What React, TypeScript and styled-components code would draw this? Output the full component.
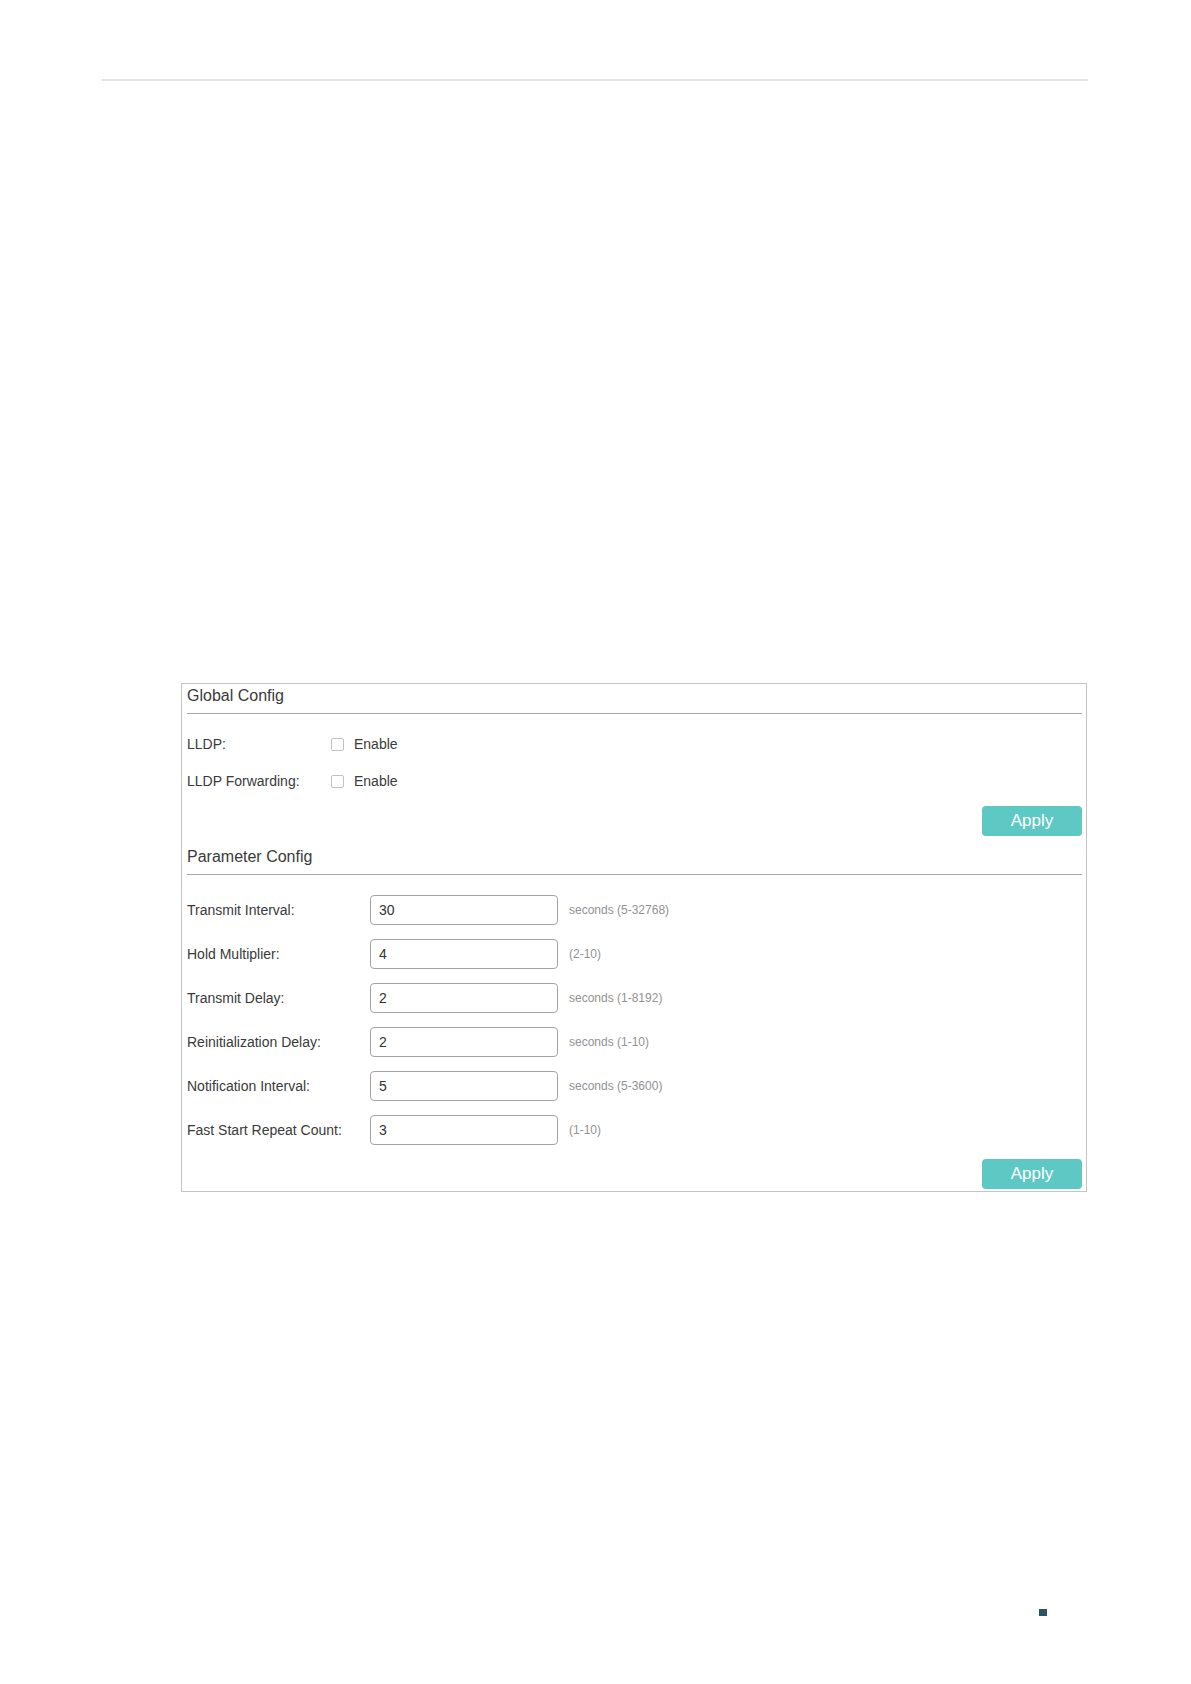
import styled, { createGlobalStyle } from "styled-components";

const GlobalStyle = createGlobalStyle`
  body {
    margin: 0;
    background: #ffffff;
    font-family: "Liberation Sans", Arial, sans-serif;
    color: #3a3a3a;
  }
`;

const Page = styled.div`
  width: 1191px;
  min-height: 1684px;
  padding-top: 79px;
  box-sizing: border-box;
`;

const TopRule = styled.div`
  margin: 0 103px 0 102px;
  height: 2px;
  background: #e4e4e4;
`;

const Panel = styled.div`
  margin: 602px 0 0 181px;
  width: 906px;
  box-sizing: border-box;
  border: 1px solid #c4c4c4;
  padding: 0 4px 2px 5px;
`;

const SectionTitle = styled.div<{ $top: number }>`
  font-size: 16px;
  line-height: 22px;
  color: #3a3a3a;
  padding-top: 1px;
  padding-bottom: 6px;
  border-bottom: 1px solid #a6a6a6;
  margin-top: ${(p) => p.$top}px;
`;

const CheckList = styled.div`
  display: flex;
  flex-direction: column;
  gap: 13px;
  margin-top: 18px;
`;

const CheckRow = styled.div`
  display: grid;
  grid-template-columns: 144px auto;
  align-items: center;
  height: 24px;
`;

const Label = styled.span`
  font-size: 14px;
  color: #3a3a3a;
`;

const CheckLabel = styled.label`
  display: flex;
  align-items: center;
  gap: 10px;
  font-size: 14px;
  color: #3a3a3a;
`;

const Box = styled.input`
  appearance: none;
  margin: 0;
  width: 13px;
  height: 13px;
  border: 1px solid #c2c2c2;
  border-radius: 2px;
  background: #fff;
  box-sizing: border-box;
`;

const ButtonBar = styled.div<{ $top: number }>`
  display: flex;
  justify-content: flex-end;
  margin-top: ${(p) => p.$top}px;
`;

const ApplyButton = styled.button`
  width: 100px;
  height: 30px;
  border: none;
  border-radius: 4px;
  background: #5ec8c4;
  color: #ffffff;
  font-family: "Liberation Sans", Arial, sans-serif;
  font-size: 17px;
  padding: 0;
`;

const ParamList = styled.div`
  display: flex;
  flex-direction: column;
  gap: 14px;
  margin-top: 20px;
`;

const ParamRow = styled.div`
  display: grid;
  grid-template-columns: 183px 188px auto;
  align-items: center;
`;

const Field = styled.input`
  width: 188px;
  height: 30px;
  box-sizing: border-box;
  border: 1px solid #a3a3a3;
  border-radius: 4px;
  padding: 0 8px;
  font-family: "Liberation Sans", Arial, sans-serif;
  font-size: 14px;
  color: #333333;
  background: #fff;
  outline: none;
`;

const Hint = styled.span`
  margin-left: 11px;
  font-size: 12px;
  color: #929292;
`;

const Footer = styled.div`
  display: flex;
  justify-content: flex-end;
  margin-top: 417px;
  padding-right: 144px;
`;

const Marker = styled.div`
  width: 8px;
  height: 7px;
  background: #2c5465;
`;

const params = [
  { label: "Transmit Interval:", value: "30", hint: "seconds (5-32768)" },
  { label: "Hold Multiplier:", value: "4", hint: "(2-10)" },
  { label: "Transmit Delay:", value: "2", hint: "seconds (1-8192)" },
  { label: "Reinitialization Delay:", value: "2", hint: "seconds (1-10)" },
  { label: "Notification Interval:", value: "5", hint: "seconds (5-3600)" },
  { label: "Fast Start Repeat Count:", value: "3", hint: "(1-10)" },
];

export default function App() {
  return (
    <>
      <GlobalStyle />
      <Page>
        <TopRule />
        <Panel>
          <SectionTitle $top={0}>Global Config</SectionTitle>
          <CheckList>
            <CheckRow>
              <Label>LLDP:</Label>
              <CheckLabel>
                <Box type="checkbox" />
                Enable
              </CheckLabel>
            </CheckRow>
            <CheckRow>
              <Label>LLDP Forwarding:</Label>
              <CheckLabel>
                <Box type="checkbox" />
                Enable
              </CheckLabel>
            </CheckRow>
          </CheckList>
          <ButtonBar $top={13}>
            <ApplyButton>Apply</ApplyButton>
          </ButtonBar>

          <SectionTitle $top={9}>Parameter Config</SectionTitle>
          <ParamList>
            {params.map((p) => (
              <ParamRow key={p.label}>
                <Label>{p.label}</Label>
                <Field defaultValue={p.value} />
                <Hint>{p.hint}</Hint>
              </ParamRow>
            ))}
          </ParamList>
          <ButtonBar $top={14}>
            <ApplyButton>Apply</ApplyButton>
          </ButtonBar>
        </Panel>
        <Footer>
          <Marker />
        </Footer>
      </Page>
    </>
  );
}
